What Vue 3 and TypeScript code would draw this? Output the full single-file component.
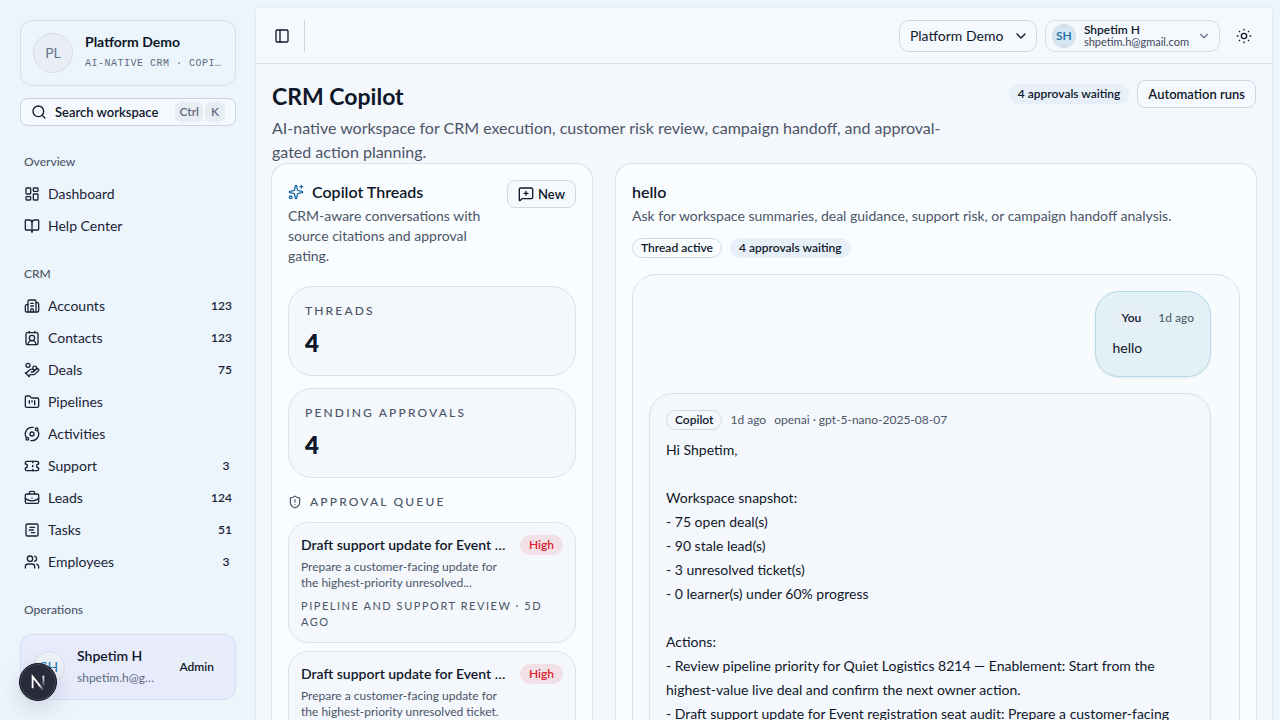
<script setup lang="ts">
import { ref } from 'vue'

interface NavItem {
  label: string
  icon: string[]
  count?: number
}
interface NavGroup {
  title: string
  items: NavItem[]
}
interface Approval {
  id: number
  title: string
  summary: string
  meta: string
}

const circle = (x: number, y: number, r: number): string =>
  `M${x - r} ${y}a${r} ${r} 0 1 0 ${r * 2} 0a${r} ${r} 0 1 0 ${-r * 2} 0z`
const box = (x: number, y: number, w: number, h: number, r: number): string =>
  `M${x + r} ${y}h${w - 2 * r}a${r} ${r} 0 0 1 ${r} ${r}v${h - 2 * r}a${r} ${r} 0 0 1 ${-r} ${r}h${-(w - 2 * r)}a${r} ${r} 0 0 1 ${-r} ${-r}v${-(h - 2 * r)}a${r} ${r} 0 0 1 ${r} ${-r}z`

const chevron = 'm6 9 6 6 6-6'

const groups: NavGroup[] = [
  {
    title: 'Overview',
    items: [
      { label: 'Dashboard', icon: [box(3, 3, 7, 9, 1), box(14, 3, 7, 5, 1), box(14, 12, 7, 9, 1), box(3, 16, 7, 5, 1)] },
      {
        label: 'Help Center',
        icon: ['M12 7v14', 'M3 18a1 1 0 0 1-1-1V4a1 1 0 0 1 1-1h5a4 4 0 0 1 4 4 4 4 0 0 1 4-4h5a1 1 0 0 1 1 1v13a1 1 0 0 1-1 1h-6a3 3 0 0 0-3 3 3 3 0 0 0-3-3z'],
      },
    ],
  },
  {
    title: 'CRM',
    items: [
      {
        label: 'Accounts',
        count: 123,
        icon: ['M10 12h4', 'M10 8h4', 'M14 21v-3a2 2 0 0 0-4 0v3', 'M6 10H4a2 2 0 0 0-2 2v7a2 2 0 0 0 2 2h16a2 2 0 0 0 2-2V9a2 2 0 0 0-2-2h-2', 'M6 21V5a2 2 0 0 1 2-2h8a2 2 0 0 1 2 2v16'],
      },
      { label: 'Contacts', count: 123, icon: ['M16 2v2', 'M17.915 22a6 6 0 0 0-12 0', 'M8 2v2', circle(12, 12, 4), box(3, 4, 18, 18, 2)] },
      {
        label: 'Deals',
        count: 75,
        icon: ['M11 15h2a2 2 0 1 0 0-4h-3c-.6 0-1.1.2-1.4.6L3 17', 'm7 21 1.6-1.4c.3-.4.8-.6 1.4-.6h4c1.1 0 2.1-.4 2.8-1.2l4.6-4.4a2 2 0 0 0-2.75-2.91l-4.2 3.9', 'm2 16 6 6', circle(16, 9, 2.9), circle(6, 5, 3)],
      },
      {
        label: 'Pipelines',
        icon: ['M4 20h16a2 2 0 0 0 2-2V8a2 2 0 0 0-2-2h-7.93a2 2 0 0 1-1.66-.9l-.82-1.2A2 2 0 0 0 7.93 3H4a2 2 0 0 0-2 2v13c0 1.1.9 2 2 2Z', 'M8 10v4', 'M12 10v2', 'M16 10v6'],
      },
      { label: 'Activities', icon: ['M20.341 6.484A10 10 0 0 1 10.266 21.85', 'M3.659 17.516A10 10 0 0 1 13.74 2.152', circle(12, 12, 3), circle(19, 5, 2), circle(5, 19, 2)] },
      {
        label: 'Support',
        count: 3,
        icon: ['M2 9a3 3 0 0 1 0 6v2a2 2 0 0 0 2 2h16a2 2 0 0 0 2-2v-2a3 3 0 0 1 0-6V7a2 2 0 0 0-2-2H4a2 2 0 0 0-2 2Z', 'M13 5v2', 'M13 17v2', 'M13 11v2'],
      },
      { label: 'Leads', count: 124, icon: ['M12 12h.01', 'M16 6V4a2 2 0 0 0-2-2h-4a2 2 0 0 0-2 2v2', 'M22 13a18.15 18.15 0 0 1-20 0', box(2, 6, 20, 14, 2)] },
      { label: 'Tasks', count: 51, icon: [box(3, 3, 18, 18, 2), 'M9 8h7', 'M8 12h6', 'M11 16h5'] },
      { label: 'Employees', count: 3, icon: ['M16 21v-2a4 4 0 0 0-4-4H6a4 4 0 0 0-4 4v2', 'M16 3.128a4 4 0 0 1 0 7.744', 'M22 21v-2a4 4 0 0 0-3-3.87', circle(9, 7, 4)] },
    ],
  },
  { title: 'Operations', items: [] },
]

const stats = [
  { label: 'Threads', value: 4 },
  { label: 'Pending approvals', value: 4 },
]

const approvals: Approval[] = [
  {
    id: 1,
    title: 'Draft support update for Event registration seat audit',
    summary: 'Prepare a customer-facing update for the highest-priority unresolved...',
    meta: 'Pipeline and support review · 5d ago',
  },
  {
    id: 2,
    title: 'Draft support update for Event registration seat audit',
    summary: 'Prepare a customer-facing update for the highest-priority unresolved ticket.',
    meta: 'Pipeline and support review · 5d ago',
  },
]

const reply = `Hi Shpetim,

Workspace snapshot:
- 75 open deal(s)
- 90 stale lead(s)
- 3 unresolved ticket(s)
- 0 learner(s) under 60% progress

Actions:
- Review pipeline priority for Quiet Logistics 8214 — Enablement: Start from the highest-value live deal and confirm the next owner action.
- Draft support update for Event registration seat audit: Prepare a customer-facing update for the highest-priority unresolved ticket.`

const workspace = ref('Platform Demo')
</script>

<template>
  <div class="shell">
    <aside class="sidebar">
      <div class="brand">
        <span class="avatar brand-avatar">PL</span>
        <div class="stack">
          <strong class="name">Platform Demo</strong>
          <span class="tagline">AI-NATIVE CRM · COPILOT</span>
        </div>
      </div>

      <button class="search" type="button">
        <svg class="icon" viewBox="0 0 24 24"><path d="m21 21-4.34-4.34" /><circle cx="11" cy="11" r="8" /></svg>
        <span class="search-label">Search workspace</span>
        <span class="keys"><kbd>Ctrl</kbd><kbd>K</kbd></span>
      </button>

      <nav class="nav">
        <section v-for="group in groups" :key="group.title">
          <h2 class="group-title">{{ group.title }}</h2>
          <a v-for="item in group.items" :key="item.label" class="nav-item" href="#">
            <svg class="icon" viewBox="0 0 24 24"><path v-for="d in item.icon" :key="d" :d="d" /></svg>
            <span>{{ item.label }}</span>
            <span v-if="item.count" class="count">{{ item.count }}</span>
          </a>
        </section>
      </nav>

      <div class="account">
        <span class="avatar account-avatar">SH</span>
        <div class="stack">
          <span class="name">Shpetim H</span>
          <span class="mail">shpetim.h@gmail.com</span>
        </div>
        <span class="badge role">Admin</span>
      </div>
    </aside>

    <main class="main">
      <header class="topbar">
        <button class="icon-button" type="button" aria-label="Toggle sidebar">
          <svg class="icon" viewBox="0 0 24 24"><rect x="3" y="3" width="18" height="18" rx="2" /><path d="M9 3v18" /></svg>
        </button>
        <span class="divider"></span>
        <div class="topbar-end">
          <div class="select">
            <select v-model="workspace" aria-label="Workspace">
              <option>Platform Demo</option>
            </select>
            <svg class="icon select-chevron" viewBox="0 0 24 24"><path :d="chevron" /></svg>
          </div>
          <button class="user" type="button">
            <span class="avatar user-avatar">SH</span>
            <span class="user-text">
              <span class="user-name">Shpetim H</span>
              <span class="user-mail">shpetim.h@gmail.com</span>
            </span>
            <svg class="icon small muted" viewBox="0 0 24 24"><path :d="chevron" /></svg>
          </button>
          <button class="icon-button theme" type="button" aria-label="Toggle theme">
            <svg class="icon" viewBox="0 0 24 24">
              <circle cx="12" cy="12" r="4" />
              <path d="M12 2v1M12 21v1M2 12h1M21 12h1M19 5l-.5.5M5.5 18.5 5 19M5 5l.5.5M18.5 18.5l.5.5" />
            </svg>
          </button>
        </div>
      </header>

      <div class="content">
        <div class="page-head">
          <div class="page-title">
            <h1>CRM Copilot</h1>
            <p>AI-native workspace for CRM execution, customer risk review, campaign handoff, and approval-gated action planning.</p>
          </div>
          <div class="page-actions">
            <span class="badge soft">4 approvals waiting</span>
            <button class="button" type="button">Automation runs</button>
          </div>
        </div>

        <div class="columns">
          <section class="card threads">
            <div class="card-head">
              <div>
                <h2 class="card-title">
                  <svg class="icon accent" viewBox="0 0 24 24">
                    <path d="M11.017 2.814a1 1 0 0 1 1.966 0l1.051 5.558a2 2 0 0 0 1.594 1.594l5.558 1.051a1 1 0 0 1 0 1.966l-5.558 1.051a2 2 0 0 0-1.594 1.594l-1.051 5.558a1 1 0 0 1-1.966 0l-1.051-5.558a2 2 0 0 0-1.594-1.594l-5.558-1.051a1 1 0 0 1 0-1.966l5.558-1.051a2 2 0 0 0 1.594-1.594z" />
                    <path d="M20 2v4M22 4h-4" />
                    <circle cx="4" cy="20" r="2" />
                  </svg>
                  Copilot Threads
                </h2>
                <p class="card-text">CRM-aware conversations with source citations and approval gating.</p>
              </div>
              <button class="button new" type="button">
                <svg class="icon" viewBox="0 0 24 24">
                  <path d="M22 17a2 2 0 0 1-2 2H6.828a2 2 0 0 0-1.414.586l-2.202 2.202A.71.71 0 0 1 2 21.286V5a2 2 0 0 1 2-2h16a2 2 0 0 1 2 2z" />
                  <path d="M12 8v6M9 11h6" />
                </svg>
                New
              </button>
            </div>

            <div class="stats">
              <div v-for="stat in stats" :key="stat.label" class="stat">
                <span class="eyebrow">{{ stat.label }}</span>
                <span class="stat-value">{{ stat.value }}</span>
              </div>
            </div>

            <h3 class="eyebrow queue-title">
              <svg class="icon small" viewBox="0 0 24 24">
                <path d="M20 13c0 5-3.5 7.5-7.66 8.95a1 1 0 0 1-.67-.01C7.5 20.5 4 18 4 13V6a1 1 0 0 1 1-1c2 0 4.5-1.2 6.24-2.72a1.17 1.17 0 0 1 1.52 0C14.51 3.81 17 5 19 5a1 1 0 0 1 1 1z" />
                <path d="M12 8v4M12 16h.01" />
              </svg>
              Approval queue
            </h3>
            <div class="queue">
              <article v-for="entry in approvals" :key="entry.id" class="approval">
                <div class="approval-top">
                  <div class="stack">
                    <h4>{{ entry.title }}</h4>
                    <p>{{ entry.summary }}</p>
                  </div>
                  <span class="badge high">High</span>
                </div>
                <span class="meta">{{ entry.meta }}</span>
              </article>
            </div>
          </section>

          <section class="card chat">
            <h2 class="card-title">hello</h2>
            <p class="card-text">Ask for workspace summaries, deal guidance, support risk, or campaign handoff analysis.</p>
            <div class="chips">
              <span class="badge outline">Thread active</span>
              <span class="badge soft">4 approvals waiting</span>
            </div>
            <div class="messages">
              <article class="message mine">
                <div class="message-head">
                  <span class="badge soft">You</span>
                  <span>1d ago</span>
                </div>
                <p>hello</p>
              </article>
              <article class="message">
                <div class="message-head">
                  <span class="badge outline">Copilot</span>
                  <span>1d ago</span>
                  <span>openai · gpt-5-nano-2025-08-07</span>
                </div>
                <p>{{ reply }}</p>
              </article>
            </div>
          </section>
        </div>
      </div>
    </main>

    <button class="dev-tools" type="button" aria-label="Open developer tools">
      <svg viewBox="0 0 40 40" fill="none">
        <defs>
          <linearGradient id="diagonal" x1="22" y1="22" x2="27" y2="29" gradientUnits="userSpaceOnUse">
            <stop stop-color="#fff" />
            <stop offset="1" stop-color="#fff" stop-opacity="0" />
          </linearGradient>
          <linearGradient id="upright" x1="26" y1="13" x2="26" y2="26" gradientUnits="userSpaceOnUse">
            <stop stop-color="#fff" />
            <stop offset="1" stop-color="#fff" stop-opacity="0" />
          </linearGradient>
        </defs>
        <path d="M14 27V14L22 24" stroke="#fff" stroke-width="2" />
        <path d="M21 23L26 29" stroke="url(#diagonal)" stroke-width="2" />
        <path d="M25 13h2v13h-2z" fill="url(#upright)" />
      </svg>
    </button>
  </div>
</template>

<style>
body {
  margin: 0;
  background: #ecf4fc;
}
</style>

<style scoped>
.shell {
  display: flex;
  height: 100vh;
  overflow: hidden;
  box-sizing: border-box;
  background: #ecf4fc;
  color: #0f172a;
  font-family: Lato, 'Open Sans', sans-serif;
  font-size: 14px;
  line-height: 20px;
}
.shell *,
.shell *::before {
  box-sizing: border-box;
}
h1, h2, h3, h4, p {
  margin: 0;
  font-weight: 400;
}
button, select {
  font: inherit;
  color: inherit;
  cursor: pointer;
}
.icon {
  width: 16px;
  height: 16px;
  flex: none;
  fill: none;
  stroke: currentColor;
  stroke-width: 2;
  stroke-linecap: round;
  stroke-linejoin: round;
}
.icon.small {
  width: 14px;
  height: 14px;
}
.muted {
  color: #64748b;
}
.accent {
  color: #1a6ba6;
}
.avatar {
  display: flex;
  align-items: center;
  justify-content: center;
  flex: none;
  border: 1px solid #d5dce6;
  border-radius: 50%;
}
.stack {
  display: flex;
  flex-direction: column;
  flex: 1;
  min-width: 0;
}
.badge {
  display: inline-flex;
  align-items: center;
  flex: none;
  height: 20px;
  padding: 0 8px;
  border: 1px solid transparent;
  border-radius: 10px;
  font-size: 12px;
  font-weight: 600;
  line-height: 16px;
  white-space: nowrap;
}
.badge.soft {
  background: #e7eff8;
}
.badge.outline {
  border-color: #d1d9e6;
}
.badge.high {
  background: #f1e0e6;
  color: #dc2030;
}
.button {
  display: inline-flex;
  align-items: center;
  flex: none;
  height: 28px;
  gap: 4px;
  padding: 0 10px;
  border: 1px solid #ced7e5;
  border-radius: 8px;
  background: #f5f9fe;
  font-size: 13px;
  font-weight: 600;
  white-space: nowrap;
}

/* Sidebar */
.sidebar {
  display: flex;
  flex-direction: column;
  flex: none;
  width: 256px;
  padding: 20px;
}
.brand,
.account {
  display: flex;
  align-items: center;
  flex: none;
  gap: 12px;
  height: 66px;
  padding: 12px;
  border: 1px solid #d6e0ec;
  border-radius: 12px;
}
.brand .stack,
.account .stack {
  gap: 2px;
}
.brand {
  margin-bottom: 12px;
}
.brand-avatar {
  width: 40px;
  height: 40px;
  background: #e9eef6;
  color: #64748b;
}
.name {
  font-weight: 600;
}
.brand .name {
  font-weight: 700;
}
.tagline {
  overflow: hidden;
  color: #5d6a7e;
  font-family: 'Liberation Mono', monospace;
  font-size: 10px;
  letter-spacing: 0.05em;
  line-height: 20px;
  text-overflow: ellipsis;
  white-space: nowrap;
}
.search {
  display: flex;
  align-items: center;
  flex: none;
  height: 28px;
  gap: 8px;
  padding: 0 10px;
  border: 1px solid #cbd5e3;
  border-radius: 8px;
  background: #f5f9fe;
  font-size: 13px;
  font-weight: 600;
}
.search-label {
  flex: 1;
  text-align: left;
}
.keys {
  display: flex;
  gap: 2px;
}
kbd {
  min-width: 20px;
  height: 20px;
  padding: 0 4px;
  border-radius: 6px;
  background: #e8edf4;
  color: #5d6a7e;
  font-family: inherit;
  font-size: 12px;
  line-height: 20px;
  text-align: center;
}
.nav {
  display: flex;
  flex-direction: column;
  flex: 1;
  gap: 16px;
  min-height: 0;
  margin-top: 20px;
  overflow: hidden;
}
.group-title {
  padding: 0 4px;
  color: #4b5568;
  font-size: 12px;
  font-weight: 500;
  line-height: 32px;
}
.nav-item {
  display: flex;
  align-items: center;
  height: 32px;
  gap: 8px;
  padding-left: 4px;
  color: #1b2436;
  text-decoration: none;
}
.count {
  min-width: 20px;
  margin-left: auto;
  padding: 0 4px;
  font-size: 12px;
  font-weight: 600;
  text-align: center;
}
.account {
  background: #e8ebfc;
}
.account-avatar {
  width: 32px;
  height: 32px;
  background: #ecf1f8;
  color: #2b78b0;
}
.mail {
  overflow: hidden;
  color: #5d6a7e;
  font-size: 12px;
  line-height: 20px;
  text-overflow: ellipsis;
  white-space: nowrap;
}
.role {
  background: #e7eef8;
}

/* Main panel */
.main {
  display: flex;
  flex-direction: column;
  flex: 1;
  min-width: 0;
  margin: 8px 8px 0 0;
  background: #f4f7fc;
  box-shadow: 0 1px 3px rgba(15, 23, 42, 0.12);
}
.topbar {
  display: flex;
  align-items: center;
  flex: none;
  height: 56px;
  padding: 0 12px 0 10px;
  border-bottom: 1px solid #d5e5f0;
  background: #f5f9fe;
}
.icon-button {
  display: flex;
  align-items: center;
  justify-content: center;
  width: 32px;
  height: 32px;
  padding: 0;
  border: 0;
  background: none;
}
.divider {
  width: 1px;
  height: 32px;
  margin-left: 6px;
  background: #cbd5e3;
}
.topbar-end {
  display: flex;
  gap: 8px;
  margin-left: auto;
}
.select {
  display: flex;
  align-items: center;
  position: relative;
}
.select select {
  height: 32px;
  padding: 0 32px 0 10px;
  border: 1px solid #ced9e6;
  border-radius: 10px;
  background: #f5f9fe;
  appearance: none;
  font-size: 14px;
}
.select-chevron {
  position: absolute;
  right: 8px;
  pointer-events: none;
}
.user {
  display: flex;
  align-items: center;
  height: 32px;
  gap: 8px;
  padding: 0 8px 0 6px;
  border: 1px solid #d0dbe7;
  border-radius: 10px;
  background: #f5f9fe;
  text-align: left;
}
.user-avatar {
  width: 24px;
  height: 24px;
  background: #d2e7f1;
  color: #1a6ba6;
  font-size: 12px;
  font-weight: 600;
}
.user-text {
  display: flex;
  flex-direction: column;
}
.user-name {
  font-size: 12px;
  font-weight: 600;
  line-height: 13px;
}
.user-mail {
  color: #3b475b;
  font-size: 11px;
  line-height: 12px;
}
.content {
  flex: 1;
  min-height: 0;
  padding: 16px;
  overflow: hidden;
}
.page-head {
  display: flex;
  align-items: flex-start;
  justify-content: space-between;
}
.page-title {
  max-width: 704px;
}
h1 {
  font-size: 23px;
  font-weight: 700;
  line-height: 32px;
}
.page-title p {
  margin-top: 4px;
  color: #4b5568;
  font-size: 16px;
  line-height: 24px;
}
.page-actions {
  display: flex;
  align-items: center;
  gap: 8px;
}
.columns {
  display: grid;
  grid-template-columns: 320px minmax(0, 1fr);
  gap: 24px;
}
.card {
  padding: 16px;
  border-radius: 16px;
  background: #f9fdff;
  box-shadow: 0 0 0 1px #dde2ea;
}
.card-title {
  display: flex;
  align-items: center;
  gap: 8px;
  font-size: 16px;
  font-weight: 600;
  line-height: 24px;
}
.card-text {
  margin-top: 2px;
  color: #4b5568;
}
.card-head {
  display: flex;
  align-items: flex-start;
  justify-content: space-between;
  gap: 8px;
  margin-bottom: 20px;
}
.stats {
  display: grid;
  gap: 12px;
}
.stat {
  display: flex;
  flex-direction: column;
  gap: 8px;
  padding: 16px;
  border: 1px solid #dbe1ea;
  border-radius: 24px;
  background: #f4f7fc;
}
.eyebrow {
  color: #4b5568;
  font-size: 12px;
  font-weight: 500;
  letter-spacing: 0.18em;
  line-height: 16px;
  text-transform: uppercase;
}
.stat-value {
  font-size: 24px;
  font-weight: 800;
  line-height: 32px;
}
.queue-title {
  display: flex;
  align-items: center;
  gap: 8px;
  margin: 16px 0 12px;
}
.queue {
  display: grid;
  grid-template-columns: minmax(0, 1fr);
  gap: 8px;
}
.approval {
  display: flex;
  flex-direction: column;
  gap: 7px;
  padding: 12px;
  border: 1px solid #dbe1ea;
  border-radius: 20px;
  background: #f4f7fc;
}
.approval-top {
  display: flex;
  align-items: flex-start;
  gap: 12px;
}
.approval h4 {
  overflow: hidden;
  font-weight: 600;
  text-overflow: ellipsis;
  white-space: nowrap;
}
.approval p {
  margin-top: 4px;
  color: #4b5568;
  font-size: 12px;
  line-height: 16px;
}
.meta {
  color: #4b5568;
  font-size: 11px;
  letter-spacing: 0.14em;
  line-height: 16px;
  text-transform: uppercase;
}

/* Conversation */
.chips {
  display: flex;
  gap: 8px;
  margin: 12px 0 16px;
}
.messages {
  display: flex;
  flex-direction: column;
  gap: 16px;
  padding: 16px 28px 16px 16px;
  border: 1px solid #dbe1ea;
  border-radius: 24px;
  background: #f7fbfe;
}
.message {
  padding: 16px;
  border: 1px solid #dbe1ea;
  border-radius: 24px;
  background: #f4f7fc;
  box-shadow: 0 1px 2px rgba(15, 23, 42, 0.08);
}
.message.mine {
  align-self: flex-end;
  border-color: #b5d9e7;
  background: #e3f0f6;
}
.message-head {
  display: flex;
  align-items: center;
  gap: 8px;
  margin-bottom: 8px;
  color: #4b5568;
  font-size: 12px;
}
.message-head .badge {
  color: #0f172a;
}
.message p {
  line-height: 24px;
  white-space: pre-line;
}

/* Floating developer button */
.dev-tools {
  position: absolute;
  bottom: 19px;
  left: 19px;
  width: 38px;
  height: 38px;
  padding: 0;
  border: 1px solid #14161f;
  border-radius: 50%;
  background: #292b3a;
  box-shadow: inset 0 0 0 1px #454856, 0 8px 24px rgba(15, 23, 42, 0.14);
}
.dev-tools svg {
  display: block;
  width: 36px;
  height: 36px;
}
</style>
